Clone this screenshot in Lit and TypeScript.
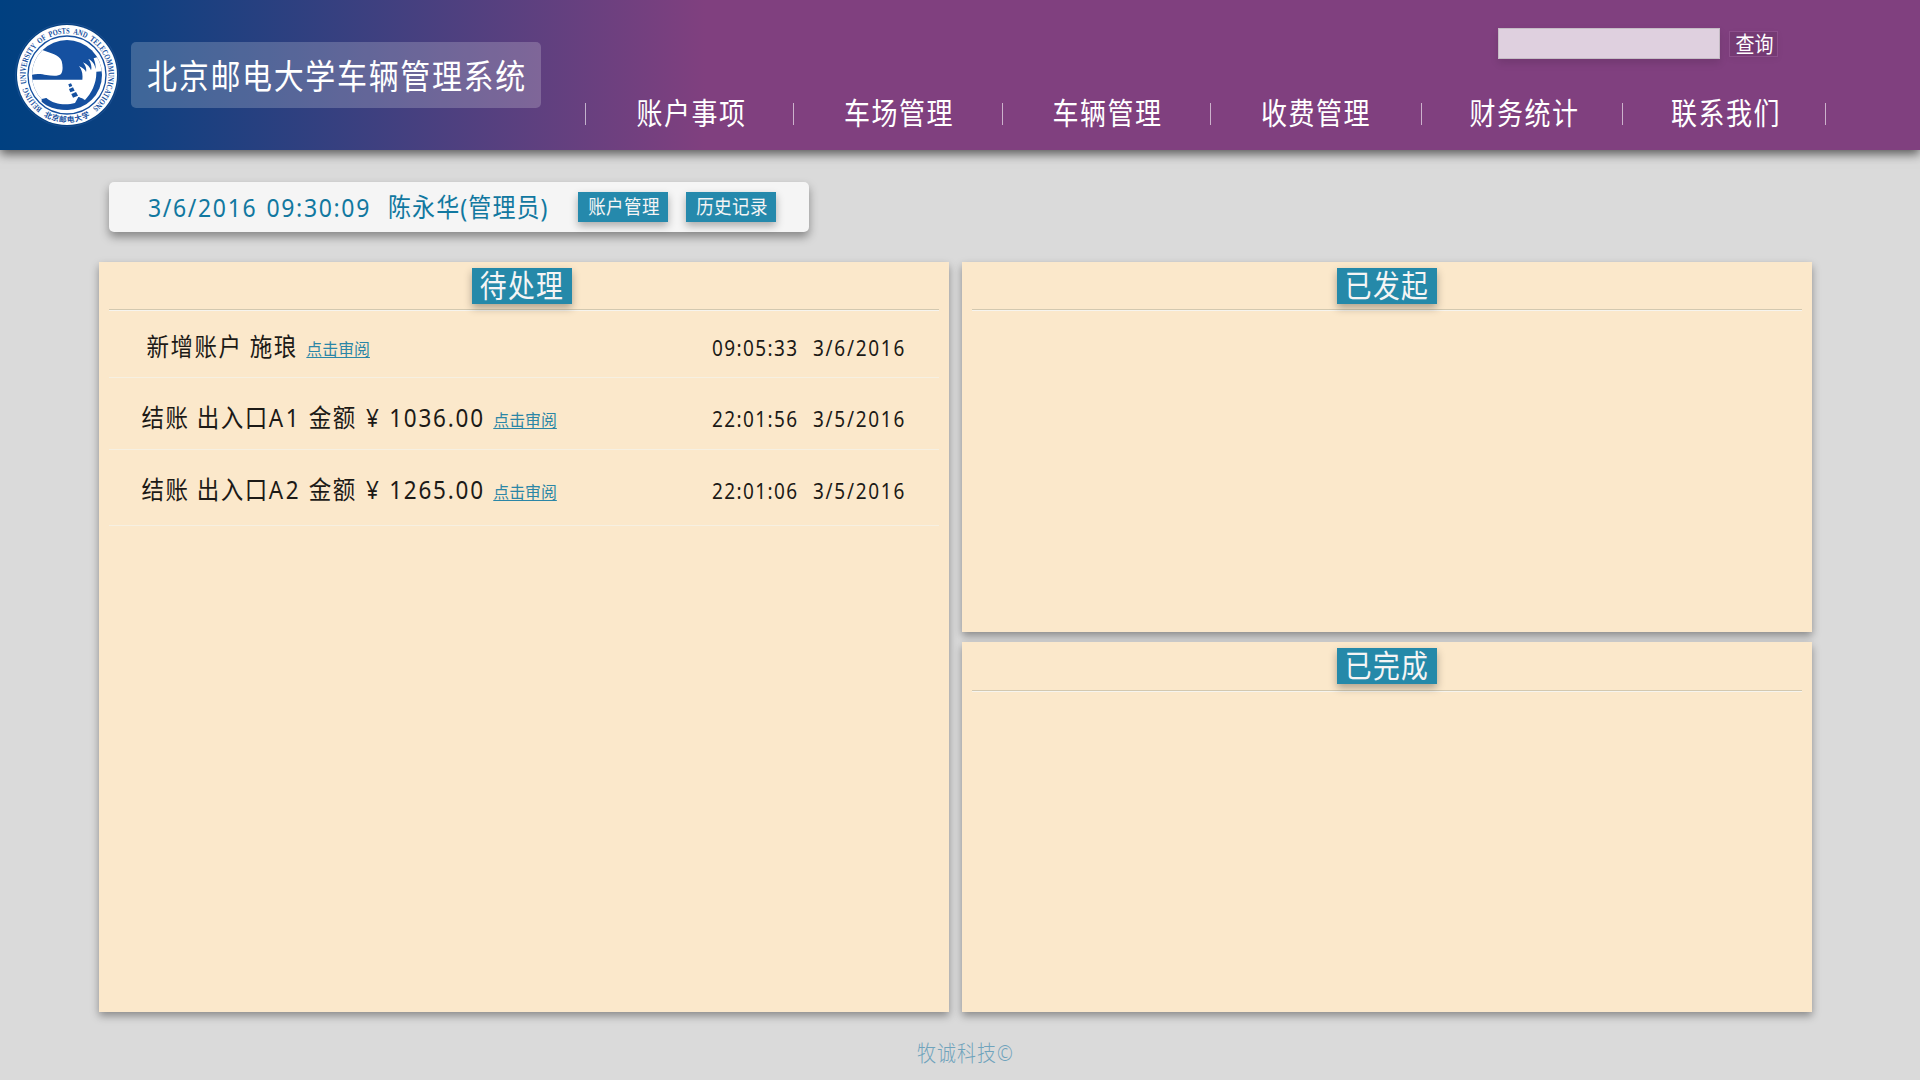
import { LitElement, html, css, svg, nothing } from "lit";
import { customElement, property } from "lit/decorators.js";

const NAV = ["账户事项", "车场管理", "车辆管理", "收费管理", "财务统计", "联系我们"];

interface Task {
  text: string;
  gate?: string;
  amount?: string;
  time: string;
  date: string;
}

const PENDING: Task[] = [
  { text: "新增账户 施琅", time: "09:05:33", date: "3/6/2016" },
  { text: "结账 出入口", gate: "A1", amount: "1036.00", time: "22:01:56", date: "3/5/2016" },
  { text: "结账 出入口", gate: "A2", amount: "1265.00", time: "22:01:06", date: "3/5/2016" },
];

@customElement("school-seal")
class SchoolSeal extends LitElement {
  static styles = css`
    :host { display: block; width: 106px; height: 106px; }
    svg { display: block; width: 106px; height: 106px; }
    .latin { font: 700 25px "Liberation Serif", serif; word-spacing: 8px; fill: #1550a0; }
    .han { font: 700 23px "Noto Sans CJK SC", sans-serif; fill: #1550a0; }
  `;
  /* Drawn in units of a third of a pixel, with the centre of the seal at 0,0. */
  render() {
    return html`<svg viewBox="-159 -159 318 318">
      ${svg`
      <defs>
        <path id="ring" d="M -74 100 A 124.4 124.4 0 1 1 74 100" />
        <path id="lower" d="M -74 121 A 142 142 0 0 0 74 121" />
        <clipPath id="disc"><circle r="105" /></clipPath>
      </defs>
      <circle r="155" fill="none" stroke="#2c5fa2" stroke-width="1.5" />
      <circle r="150" fill="#fff" />
      <circle r="117" fill="none" stroke="#1550a0" stroke-width="4" />
      <circle r="105" fill="#1550a0" />
      <g clip-path="url(#disc)">
        <path fill="#fff" d="M -110 -90 L -72 -74 C -50 -66 -24 -60 -16 -42 C -12 -26 -12 -12 -18 -3 C -24 4 -45 3 -62 0 C -75 -3 -96 -6 -112 2 Z" />
        <path fill="#fff" d="M -112 14 L 46 14 C 48 -6 44 -16 36 -27 C 48 -22 56 -14 57 -9 C 60 -20 54 -30 48 -38 C 62 -32 70 -22 72 -14 C 76 -26 70 -40 64 -48 C 78 -42 85 -28 85 -18 C 88 -30 82 -42 80 -50 L 112 -60 L 112 -12 L 88 -10 C 89 24 74 54 54 75 L 34 66 L 36 90 C -10 108 -54 94 -62 70 L -74 76 L -98 92 L -120 60 Z" />
      </g>
      <g fill="#1550a0">
        <path d="M -76 72 L -62 69 C -40 88 -4 92 24 84 L 34 66 L 50 72 L 40 92 C 4 112 -48 106 -76 80 Z" />
        <path d="M 4 28 l 8 -3 4 8 -9 4 z" />
        <path d="M 6 42 l 12 -5 5 10 -13 5 z" />
        <path d="M 13 57 l 14 -6 6 11 -15 6 z" />
      </g>
      <text class="latin"><textPath href="#ring" textLength="620" lengthAdjust="spacingAndGlyphs">BEIJING UNIVERSITY OF POSTS AND TELECOMMUNICATIONS</textPath></text>
      <text class="han"><textPath href="#lower" startOffset="4" textLength="146" lengthAdjust="spacing">北京邮电大学</textPath></text>
      `}
    </svg>`;
  }
}

@customElement("task-panel")
class TaskPanel extends LitElement {
  @property() heading = "";
  static styles = css`
    :host {
      display: block;
      box-sizing: border-box;
      padding: 6px 10px 0;
      background: #fbe8cb;
      box-shadow: 0 4px 8px rgba(0, 0, 0, 0.36);
    }
    .head {
      display: flex;
      justify-content: center;
      height: var(--head-height, 41px);
      border-bottom: 1px solid #d2c8b0;
      box-shadow: 0 1px 0 #f6f4ee;
    }
    .tag {
      display: flex;
      align-items: center;
      justify-content: center;
      width: 100px;
      height: 36px;
      margin-right: var(--tag-shift, 0);
      background: #2589a9;
      color: #f5f5f5;
      box-shadow: 0 4px 8px rgba(0, 0, 0, 0.3);
    }
    .label {
      font-size: 26.8px;
      letter-spacing: 1.4px;
      line-height: 36px;
      margin-bottom: 1px;
      transform: scaleY(1.15);
    }
  `;
  render() {
    return html`<div class="head"><div class="tag"><span class="label">${this.heading}</span></div></div>
      <slot></slot>`;
  }
}

@customElement("app-root")
class AppRoot extends LitElement {
  static styles = css`
    :host {
      display: flex;
      flex-direction: column;
      box-sizing: border-box;
      width: 1920px;
      height: 1080px;
      overflow: hidden;
      background: #dadada;
      font-family: "Noto Sans", "Noto Sans CJK SC", sans-serif;
      font-weight: 400;
    }
    .tall { display: inline-block; transform: scaleY(1.13); white-space: pre; }
    .header {
      display: flex;
      flex: none;
      height: 150px;
      box-sizing: border-box;
      padding-left: 14px;
      background: linear-gradient(to right, #004080 0, #0d4080 130px, #80407f 705px);
      box-shadow: 0 4px 10px rgba(0, 0, 0, 0.6);
      color: #fff;
    }
    .seal { margin-top: 22px; }
    .title {
      display: flex;
      align-items: center;
      justify-content: center;
      box-sizing: border-box;
      width: 410px;
      height: 66px;
      margin: 42px 0 0 11px;
      padding: 0 0 2px 2px;
      border-radius: 5px;
      background: rgba(255, 255, 255, 0.2);
      font-size: 30px;
      letter-spacing: 1.65px;
    }
    .right { display: flex; flex-direction: column; margin-left: 44px; }
    .search { display: flex; height: 75px; padding-left: 913px; box-sizing: border-box; }
    .field {
      box-sizing: border-box;
      width: 222px;
      height: 31px;
      margin-top: 28px;
      border: 1px solid #c5bcc5;
      background: #dfd0df;
      box-shadow: 0 4px 8px rgba(0, 0, 0, 0.12);
    }
    .query {
      display: flex;
      align-items: center;
      justify-content: center;
      box-sizing: border-box;
      width: 49px;
      height: 26px;
      margin: 31px 0 0 9px;
      padding: 0 0 2px 2px;
      border: 1px solid #8c4f8b;
      background: #753a74;
      box-shadow: 0 2px 6px rgba(0, 0, 0, 0.06);
      font-size: 19px;
    }
    .nav {
      display: grid;
      grid-template-columns: 208px 209px 208px 211px 201px 204px;
      height: 75px;
      padding-top: 28px;
      box-sizing: border-box;
    }
    .item {
      display: flex;
      align-items: center;
      justify-content: center;
      height: 22px;
      padding-left: 4px;
      border-left: 1px solid rgba(255, 255, 255, 0.6);
      font-size: 26px;
      letter-spacing: 1.5px;
    }
    .item:nth-child(2), .item:nth-child(3) { padding-left: 2px; }
    .item:nth-child(4) { padding: 0; }
    .item:nth-child(5) { padding-left: 5px; }
    .item:last-child { border-right: 1px solid rgba(255, 255, 255, 0.6); }
    .item .tall { line-height: 32px; margin-bottom: 4px; transform: scaleY(1.15); }
    .user {
      display: flex;
      flex: none;
      align-items: center;
      box-sizing: border-box;
      width: 700px;
      height: 50px;
      margin: 32px 0 0 109px;
      padding-left: 39px;
      border-radius: 5px;
      background: #f5f5f5;
      box-shadow: 0 5px 10px rgba(0, 0, 0, 0.38);
      color: #1178a0;
    }
    .now { width: 240px; font-size: 23px; letter-spacing: 1.65px; word-spacing: 1.6px; }
    .name { width: 190px; margin-bottom: 2px; font-size: 23px; letter-spacing: 1.1px; }
    .btn {
      display: flex;
      align-items: center;
      justify-content: center;
      box-sizing: border-box;
      width: 90px;
      height: 30px;
      margin-right: 18px;
      padding: 0 0 4px 2px;
      background: #2589ac;
      box-shadow: 0 4px 8px rgba(0, 0, 0, 0.3);
      color: #f5f5f5;
      font-size: 17.5px;
      letter-spacing: 0.4px;
    }
    .board {
      display: grid;
      flex: none;
      grid-template-columns: 850px 850px;
      grid-template-rows: 370px 370px;
      column-gap: 13px;
      row-gap: 10px;
      margin: 30px 0 0 99px;
    }
    .pending { grid-row: 1 / 3; --tag-shift: 4px; }
    .done { --head-height: 42px; }
    .rows { display: grid; grid-template-rows: 68px 72px 76px; }
    .row {
      display: flex;
      align-items: baseline;
      box-sizing: border-box;
      padding: 23px 0 0 32.5px;
      border-bottom: 1px solid #f6f0e2;
      color: #1c1a17;
    }
    .row:first-child { padding: 20px 0 0 37.5px; }
    .what { font-size: 22.5px; line-height: 34px; letter-spacing: 1.5px; }
    .gate { letter-spacing: 2.6px; }
    .yen { margin: 0 1.5px 0 2px; }
    .amount { letter-spacing: 1.75px; }
    .link {
      margin-left: 8.5px;
      color: #2b86a6;
      font-size: 15.9px;
      line-height: 36px;
      text-decoration: underline;
      text-decoration-thickness: 1px;
      text-underline-offset: 2px;
    }
    .when { width: 227px; margin-left: auto; display: flex; font-size: 19px; letter-spacing: 1.4px; }
    .time { width: 101px; }
    .date { letter-spacing: 1.7px; }
    .footer {
      margin-top: 26px;
      padding-left: 917px;
      color: #6fa3bc;
      font-size: 19px;
      letter-spacing: 1px;
      font-weight: 300;
    }
  `;

  private what(r: Task) {
    return html`<span class="what tall">${r.text}${r.gate ? html`<span class="gate">${r.gate}</span>` : nothing}${r.amount
        ? html` 金额 <span class="yen">¥</span> <span class="amount">${r.amount}</span>`
        : nothing}</span>`;
  }

  render() {
    return html`
      <div class="header">
        <school-seal class="seal"></school-seal>
        <div class="title"><span class="tall">北京邮电大学车辆管理系统</span></div>
        <div class="right">
          <div class="search">
            <div class="field"></div>
            <div class="query"><span class="tall">查询</span></div>
          </div>
          <div class="nav">${NAV.map((n) => html`<div class="item"><span class="tall">${n}</span></div>`)}</div>
        </div>
      </div>
      <div class="user">
        <span class="now tall">3/6/2016 09:30:09</span>
        <span class="name tall">陈永华(管理员)</span>
        <div class="btn"><span class="tall">账户管理</span></div>
        <div class="btn"><span class="tall">历史记录</span></div>
      </div>
      <div class="board">
        <task-panel class="pending" heading="待处理">
          <div class="rows">
            ${PENDING.map(
              (r) => html`<div class="row">
                ${this.what(r)}
                <span class="link">点击审阅</span>
                <span class="when"><span class="time tall">${r.time}</span><span class="date tall">${r.date}</span></span>
              </div>`
            )}
          </div>
        </task-panel>
        <task-panel heading="已发起"></task-panel>
        <task-panel class="done" heading="已完成"></task-panel>
      </div>
      <div class="footer"><span class="tall">牧诚科技©</span></div>
    `;
  }
}
